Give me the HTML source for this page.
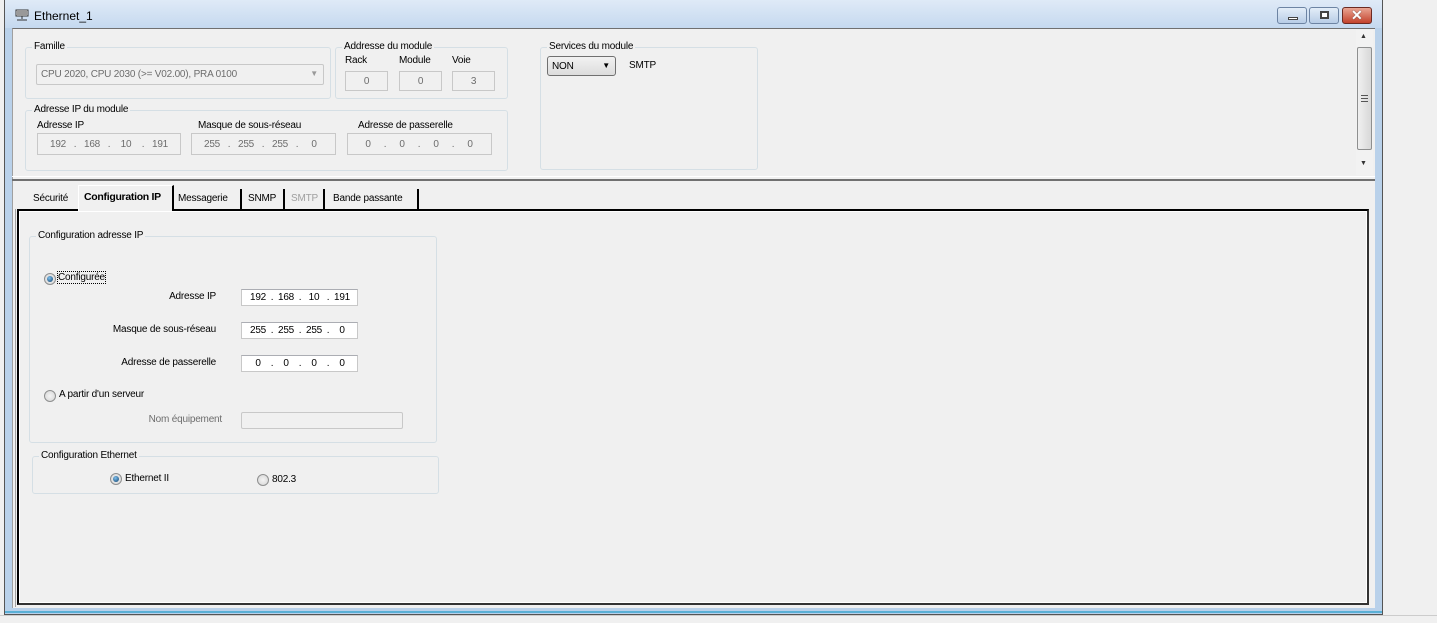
<!DOCTYPE html>
<html><head><meta charset="utf-8"><style>
*{margin:0;padding:0;box-sizing:border-box}
body{width:1437px;height:623px;background:#f0f0f0;position:relative;overflow:hidden;font-family:"Liberation Sans",Arial,sans-serif;font-size:10px;letter-spacing:-0.2px;color:#000}
.a{position:absolute}
.grp{position:absolute;border:1px solid #d5dfe5;border-radius:3px}
.grp>.t{position:absolute;top:-7px;left:6px;background:#f0f0f0;padding:0 2px;white-space:nowrap}
.box{position:absolute;border:1px solid #c8c8c8;background:#f0f0f0;color:#6d6d6d}
.wbox{position:absolute;border:1px solid #c8c8c8;border-top-color:#abadb3;background:#fff}
.lbl{position:absolute;white-space:nowrap}
.radio{position:absolute;width:12px;height:12px;border-radius:50%;border:1px solid #8e8f8f;background:radial-gradient(circle,#f4f4f4,#d4d4d4)}
.radio.on::after{content:"";position:absolute;left:2px;top:2px;width:6px;height:6px;border-radius:50%;background:radial-gradient(circle at 40% 35%,#7fc0ee,#0d3f6b)}
.tab{position:absolute;top:188px;height:22px;padding-top:5px;white-space:nowrap}
.ip{display:flex;align-items:center;height:100%}
.ip.w span{display:inline-block;text-align:center}
.ip.w span.n{width:20px}.ip.w span.d{width:8px}
.ip.g span{display:inline-block;text-align:center}
.ip.g span.n{width:24px}.ip.g span.d{width:10px}
</style></head><body>
<div class="a" style="left:4px;top:0;width:1379px;height:615px;background:#b9d1ea;border:1px solid #555;border-top:none"></div>
<div class="a" style="left:5px;top:0;width:1377px;height:28px;background:linear-gradient(#dfeaf7,#c5d9ef)"></div>
<div class="a" style="left:5px;top:611px;width:1377px;height:2px;background:#5ab0d6"></div>
<svg class="a" style="left:15px;top:9px" width="14" height="13" viewBox="0 0 14 13"><rect x="1" y="1" width="12" height="6" fill="#fff" stroke="#333"/><path d="M3 2v4M5 2v4M7 2v4M9 2v4M11 2v4" stroke="#333"/><path d="M7 7v3M2 11h10" stroke="#333"/></svg>
<div class="lbl" style="left:34px;top:9px;font-size:12px;letter-spacing:0">Ethernet_1</div>
<div class="a" style="left:1277px;top:7px;width:30px;height:17px;border:1px solid #6d84a3;border-radius:3px;background:linear-gradient(#e3edf8,#b8cde6)"><div class="a" style="left:10px;top:9px;width:10px;height:3px;background:#fff;border:1px solid #444"></div></div>
<div class="a" style="left:1309px;top:7px;width:30px;height:17px;border:1px solid #6d84a3;border-radius:3px;background:linear-gradient(#e3edf8,#b8cde6)"><div class="a" style="left:10px;top:3px;width:9px;height:8px;border:2px solid #444;background:#fff"></div></div>
<div class="a" style="left:1342px;top:7px;width:30px;height:17px;border:1px solid #6b2a22;border-radius:3px;background:linear-gradient(#e9a593,#c3422c)"><div class="lbl" style="left:8px;top:-1px;color:#fff;font-weight:bold;font-size:14px;text-shadow:0 0 1px #333">✕</div></div>
<div class="a" style="left:12px;top:28px;width:1363px;height:580px;background:#f0f0f0;border-top:1px solid #707070;border-left:1px solid #a0a0a0"></div>
<div class="a" style="left:1356px;top:30px;width:17px;height:145px;background:#f2f2f2"></div>
<div class="lbl" style="left:1360px;top:33px;font-size:7px;color:#333">▲</div>
<div class="lbl" style="left:1360px;top:160px;font-size:7px;color:#333">▼</div>
<div class="a" style="left:1357px;top:47px;width:15px;height:103px;border:1px solid #8e8f8f;border-radius:2px;background:linear-gradient(90deg,#f0f0f0,#d8d8d8)"></div>
<div class="a" style="left:1361px;top:95px;width:7px;height:7px;border-top:1px solid #555;border-bottom:1px solid #555"><div style="margin-top:2px;border-top:1px solid #555"></div></div>
<div class="grp" style="left:25px;top:47px;width:306px;height:52px"><span class="t">Famille</span></div>
<div class="box" style="left:36px;top:64px;width:288px;height:21px;border-radius:2px;padding:4px 4px"><span>CPU 2020, CPU 2030 (&gt;= V02.00), PRA 0100</span><span class="a" style="right:5px;top:4px;font-size:8px;color:#999">▼</span></div>
<div class="grp" style="left:335px;top:47px;width:173px;height:52px"><span class="t">Addresse du module</span></div>
<div class="lbl" style="left:345px;top:55px">Rack</div><div class="lbl" style="left:399px;top:55px">Module</div><div class="lbl" style="left:452px;top:55px">Voie</div>
<div class="box" style="left:345px;top:71px;width:43px;height:20px;text-align:center;padding-top:4px">0</div>
<div class="box" style="left:399px;top:71px;width:43px;height:20px;text-align:center;padding-top:4px">0</div>
<div class="box" style="left:452px;top:71px;width:43px;height:20px;text-align:center;padding-top:4px">3</div>
<div class="grp" style="left:25px;top:110px;width:483px;height:61px"><span class="t">Adresse IP du module</span></div>
<div class="lbl" style="left:37px;top:120px">Adresse IP</div><div class="lbl" style="left:198px;top:120px">Masque de sous-réseau</div><div class="lbl" style="left:358px;top:120px">Adresse de passerelle</div>
<div class="box" style="left:37px;top:133px;width:144px;height:22px;padding-left:8px"><div class="ip g"><span class="n">192</span><span class="d">.</span><span class="n">168</span><span class="d">.</span><span class="n">10</span><span class="d">.</span><span class="n">191</span></div></div>
<div class="box" style="left:191px;top:133px;width:145px;height:22px;padding-left:8px"><div class="ip g"><span class="n">255</span><span class="d">.</span><span class="n">255</span><span class="d">.</span><span class="n">255</span><span class="d">.</span><span class="n">0</span></div></div>
<div class="box" style="left:347px;top:133px;width:145px;height:22px;padding-left:8px"><div class="ip g"><span class="n">0</span><span class="d">.</span><span class="n">0</span><span class="d">.</span><span class="n">0</span><span class="d">.</span><span class="n">0</span></div></div>
<div class="grp" style="left:540px;top:47px;width:218px;height:123px"><span class="t">Services du module</span></div>
<div class="a" style="left:547px;top:56px;width:69px;height:20px;border:1px solid #707070;border-radius:3px;background:linear-gradient(#f2f2f2,#dcdcdc);padding:4px 4px">NON<span class="a" style="right:5px;top:4px;font-size:8px">▼</span></div>
<div class="lbl" style="left:629px;top:60px">SMTP</div>
<div class="a" style="left:12px;top:176px;width:1363px;height:1px;background:#fff"></div>
<div class="a" style="left:12px;top:179px;width:1363px;height:2px;background:#707070"></div>
<div class="tab" style="left:33px">Sécurité</div>
<div class="a" style="left:78px;top:185px;width:96px;height:26px;background:#f0f0f0;border-top:1px solid #fff;border-left:1px solid #fff;border-right:2px solid #000;z-index:2"><div class="lbl" style="left:5px;top:5px;font-weight:bold;font-size:10.5px;letter-spacing:-0.3px">Configuration IP</div></div>
<div class="tab" style="left:178px">Messagerie</div>
<div class="a" style="left:240px;top:189px;width:2px;height:20px;background:#000"></div>
<div class="tab" style="left:248px">SNMP</div>
<div class="a" style="left:283px;top:189px;width:2px;height:20px;background:#000"></div>
<div class="tab" style="left:291px;color:#a0a0a0">SMTP</div>
<div class="a" style="left:323px;top:189px;width:2px;height:20px;background:#000"></div>
<div class="tab" style="left:333px">Bande passante</div>
<div class="a" style="left:417px;top:189px;width:2px;height:20px;background:#000"></div>
<div class="a" style="left:17px;top:209px;width:1352px;height:396px;border:2px solid #000;border-right-color:#333;border-bottom-color:#333;outline:1px solid #fff;outline-offset:-3px"></div>
<div class="a" style="left:15px;top:209px;width:1px;height:398px;background:#a0a0a0"></div>
<div class="grp" style="left:29px;top:236px;width:408px;height:207px"><span class="t">Configuration adresse IP</span></div>
<div class="radio on" style="left:44px;top:273px"></div>
<div class="lbl" style="left:58px;top:272px;outline:1px dotted #000">Configurée</div>
<div class="lbl" style="left:100px;top:291px;width:116px;text-align:right">Adresse IP</div>
<div class="lbl" style="left:60px;top:324px;width:156px;text-align:right">Masque de sous-réseau</div>
<div class="lbl" style="left:60px;top:357px;width:156px;text-align:right">Adresse de passerelle</div>
<div class="wbox" style="left:241px;top:289px;width:117px;height:17px;padding-left:6px"><div class="ip w"><span class="n">192</span><span class="d">.</span><span class="n">168</span><span class="d">.</span><span class="n">10</span><span class="d">.</span><span class="n">191</span></div></div>
<div class="wbox" style="left:241px;top:322px;width:117px;height:17px;padding-left:6px"><div class="ip w"><span class="n">255</span><span class="d">.</span><span class="n">255</span><span class="d">.</span><span class="n">255</span><span class="d">.</span><span class="n">0</span></div></div>
<div class="wbox" style="left:241px;top:355px;width:117px;height:17px;padding-left:6px"><div class="ip w"><span class="n">0</span><span class="d">.</span><span class="n">0</span><span class="d">.</span><span class="n">0</span><span class="d">.</span><span class="n">0</span></div></div>
<div class="radio" style="left:44px;top:390px"></div>
<div class="lbl" style="left:59px;top:389px">A partir d'un serveur</div>
<div class="lbl" style="left:100px;top:414px;width:122px;text-align:right;color:#6d6d6d">Nom équipement</div>
<div class="box" style="left:241px;top:412px;width:162px;height:17px;border-radius:2px"></div>
<div class="grp" style="left:32px;top:456px;width:407px;height:38px"><span class="t">Configuration Ethernet</span></div>
<div class="radio on" style="left:110px;top:473px"></div>
<div class="lbl" style="left:125px;top:473px">Ethernet II</div>
<div class="radio" style="left:257px;top:474px"></div>
<div class="lbl" style="left:272px;top:474px">802.3</div>
<div class="a" style="left:0;top:615px;width:1437px;height:8px;background:#f0f0f0;border-top:1px solid #ccc"></div>
</body></html>
